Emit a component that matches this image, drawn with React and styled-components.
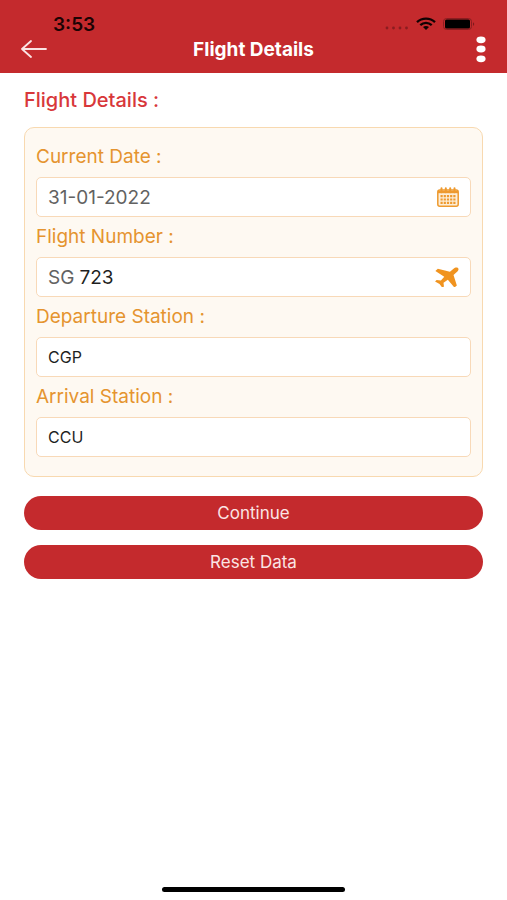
import React, { useState } from 'react'
import styled, { createGlobalStyle } from 'styled-components'

const INITIAL = { number: '723', departure: 'CGP', arrival: 'CCU' }

export default function App() {

    const [form, setForm] = useState(INITIAL);

    const update = key => e => setForm({ ...form, [key]: e.target.value })

    return (
        <Screen>
            <GlobalStyle />
            <Header>
                <StatusBar>
                    <Time>3:53</Time>
                    <StatusIcons>
                        <SignalIcon />
                        <WifiIcon />
                        <BatteryIcon />
                    </StatusIcons>
                </StatusBar>
                <NavBar>
                    <IconButton type="button" aria-label="Back"><BackIcon /></IconButton>
                    <Title>Flight Details</Title>
                    <IconButton type="button" aria-label="Menu"><MenuIcon /></IconButton>
                </NavBar>
            </Header>
            <Form onSubmit={e => e.preventDefault()}>
                <Heading>Flight Details :</Heading>
                <Card>
                    <Label htmlFor="date">Current Date :</Label>
                    <Field>
                        <Input id="date" $size={19} $color="#626262" value="31-01-2022" readOnly />
                        <CalendarIcon />
                    </Field>
                    <Label htmlFor="number">Flight Number :</Label>
                    <Field>
                        <Prefix>SG</Prefix>
                        <Input id="number" $size={19} value={form.number} onChange={update('number')} />
                        <PlaneIcon />
                    </Field>
                    <Label htmlFor="departure">Departure Station :</Label>
                    <Field>
                        <Input id="departure" value={form.departure} onChange={update('departure')} />
                    </Field>
                    <Label htmlFor="arrival">Arrival Station :</Label>
                    <Field>
                        <Input id="arrival" value={form.arrival} onChange={update('arrival')} />
                    </Field>
                </Card>
                <Actions>
                    <Button type="submit">Continue</Button>
                    <Button type="button" onClick={() => setForm(INITIAL)}>Reset Data</Button>
                </Actions>
            </Form>
            <HomeIndicator />
        </Screen>
    )
}

const SignalIcon = () => (
    <svg width="24" height="14" viewBox="0 0 24 14" fill="#8a1d20">
        <circle cx="2" cy="11" r="1.4" />
        <circle cx="8.5" cy="11" r="1.4" />
        <circle cx="15" cy="11" r="1.4" />
        <circle cx="21.5" cy="11" r="1.4" />
    </svg>
)

const WifiIcon = () => (
    <svg width="20" height="14" viewBox="0 0 20 14" fill="none" stroke="#100203" strokeWidth="2.3">
        <path d="M1 5.2C6 .4 14 .4 19 5.2" />
        <path d="M4.3 8.2c3.3-3 8.1-3 11.4 0" />
        <path d="M7 9.9c1.8-1.3 4.2-1.3 6 0L10 13z" fill="#100203" stroke="none" />
    </svg>
)

const BatteryIcon = () => (
    <svg width="32" height="14" viewBox="0 0 32 14">
        <rect x=".5" y="1.5" width="28" height="11" rx="3" fill="none" stroke="#8a1d20" />
        <rect x="2" y="2.6" width="25" height="8.8" rx="1.5" fill="#000" />
        <path d="M30 5.2c1.6.5 1.6 3.1 0 3.6z" fill="#7d1a1d" />
    </svg>
)

const BackIcon = () => (
    <svg width="26" height="18" viewBox="0 0 26 18" fill="none" stroke="#fbe4e4" strokeWidth="1.8" strokeLinecap="round" strokeLinejoin="round">
        <path d="M10 1L1 9l9 8M1 9h24" />
    </svg>
)

const MenuIcon = () => (
    <svg width="10" height="28" viewBox="0 0 10 28" fill="#fff">
        <ellipse cx="5" cy="4.8" rx="4.6" ry="3.4" />
        <ellipse cx="5" cy="14" rx="4.6" ry="3.4" />
        <ellipse cx="5" cy="23.8" rx="4.6" ry="3.4" />
    </svg>
)

const CalendarIcon = () => (
    <svg width="22" height="20" viewBox="0 0 22 20" fill="none" stroke="#ee9a2f">
        <rect x=".8" y="3" width="20.4" height="16.2" rx="2" strokeWidth="1.5" fill="#fdeed8" />
        <path d="M1 5h20" strokeWidth="2.4" />
        <path d="M4.5 1.2v4M8.8 1.2v4M13.2 1.2v4M17.5 1.2v4" strokeWidth="2" strokeLinecap="round" />
        <path d="M3.5 9.2h15M3.5 12.5h15M3.5 15.8h15" strokeWidth="2.2" strokeDasharray="2.2 1" />
    </svg>
)

const PlaneIcon = () => (
    <svg width="24" height="20" viewBox="0 0 24 20" fill="#f0931f">
        <path
            transform="translate(12.5 10) scale(1.15 1) rotate(45)"
            d="M0-12.8c-1.400 0-2.200 1.600-2.200 3.200v4.400L-11.700.2v3L-2.200 1.800-1.600 6.500l-2.900 2.400v1.900L0 9.800l4.500 1V8.900L1.600 6.500l.6-4.700 9.500 1.400v-3L2.200-5.200v-4.400C2.200-11.200 1.400-12.800 0-12.800z"
        />
    </svg>
)

const GlobalStyle = createGlobalStyle`
    * {
        box-sizing: border-box;
    }

    body {
        margin: 0;
        background: #fff;
        font-family: Inter, "Liberation Sans", sans-serif;
    }

    input, button {
        font-family: inherit;
    }

    svg {
        display: block;
        flex: none;
    }
`

const Screen = styled.div`
    display: flex;
    flex-direction: column;
    min-height: 100vh;
`

const Header = styled.header`
    padding: 14px 21px 9px;
    background: #c42a2d;
`

const StatusBar = styled.div`
    display: flex;
    align-items: center;
    justify-content: space-between;
    height: 20px;
    padding: 0 11px 0 32px;
`

const Time = styled.span`
    font-size: 19px;
    font-weight: 600;
    color: #1c0304;
`

const StatusIcons = styled.div`
    display: flex;
    align-items: center;
    gap: 7px;
`

const NavBar = styled.div`
    display: grid;
    grid-template-columns: 28px 1fr 28px;
    align-items: center;
    height: 30px;
`

const IconButton = styled.button`
    display: flex;
    padding: 0;
    border: 0;
    background: none;
    cursor: pointer;

    &:last-child {
        justify-self: end;
    }
`

const Title = styled.h1`
    margin: 0;
    font-size: 19px;
    font-weight: 700;
    text-align: center;
    color: #fff;
`

const Form = styled.form`
    flex: 1;
    padding: 15px 24px;
`

const Heading = styled.h2`
    margin: 0 0 15px;
    font-size: 20px;
    font-weight: 500;
    line-height: 24px;
    color: #d8373a;
`

const Card = styled.div`
    padding: 9px 11px 19px;
    border: 1px solid #f8d9b0;
    border-radius: 10px;
    background: #fef9f2;
`

const Label = styled.label`
    display: block;
    font-size: 19px;
    line-height: 40px;
    color: #e5942f;
`

const Field = styled.div`
    display: flex;
    align-items: center;
    height: 40px;
    padding: 0 11px;
    border: 1px solid #f8d9b8;
    border-radius: 5px;
    background: #fff;
`

const Prefix = styled.span`
    margin-right: 5px;
    font-size: 19px;
    color: #626262;
`

const Input = styled.input`
    flex: 1;
    min-width: 0;
    padding: 0;
    border: 0;
    outline: 0;
    background: none;
    font-size: ${({ $size = 16 }) => $size}px;
    color: ${({ $color = '#1f1f1f' }) => $color};
`

const Actions = styled.div`
    display: flex;
    flex-direction: column;
    gap: 15px;
    margin-top: 19px;
`

const Button = styled.button`
    height: 34px;
    border: 0;
    border-radius: 17px;
    background: #c42a2d;
    font-size: 17px;
    color: #fbe4e4;
    cursor: pointer;
`

const HomeIndicator = styled.div`
    width: 36%;
    height: 5px;
    margin: 0 auto 8px;
    border-radius: 3px;
    background: #000;
`
